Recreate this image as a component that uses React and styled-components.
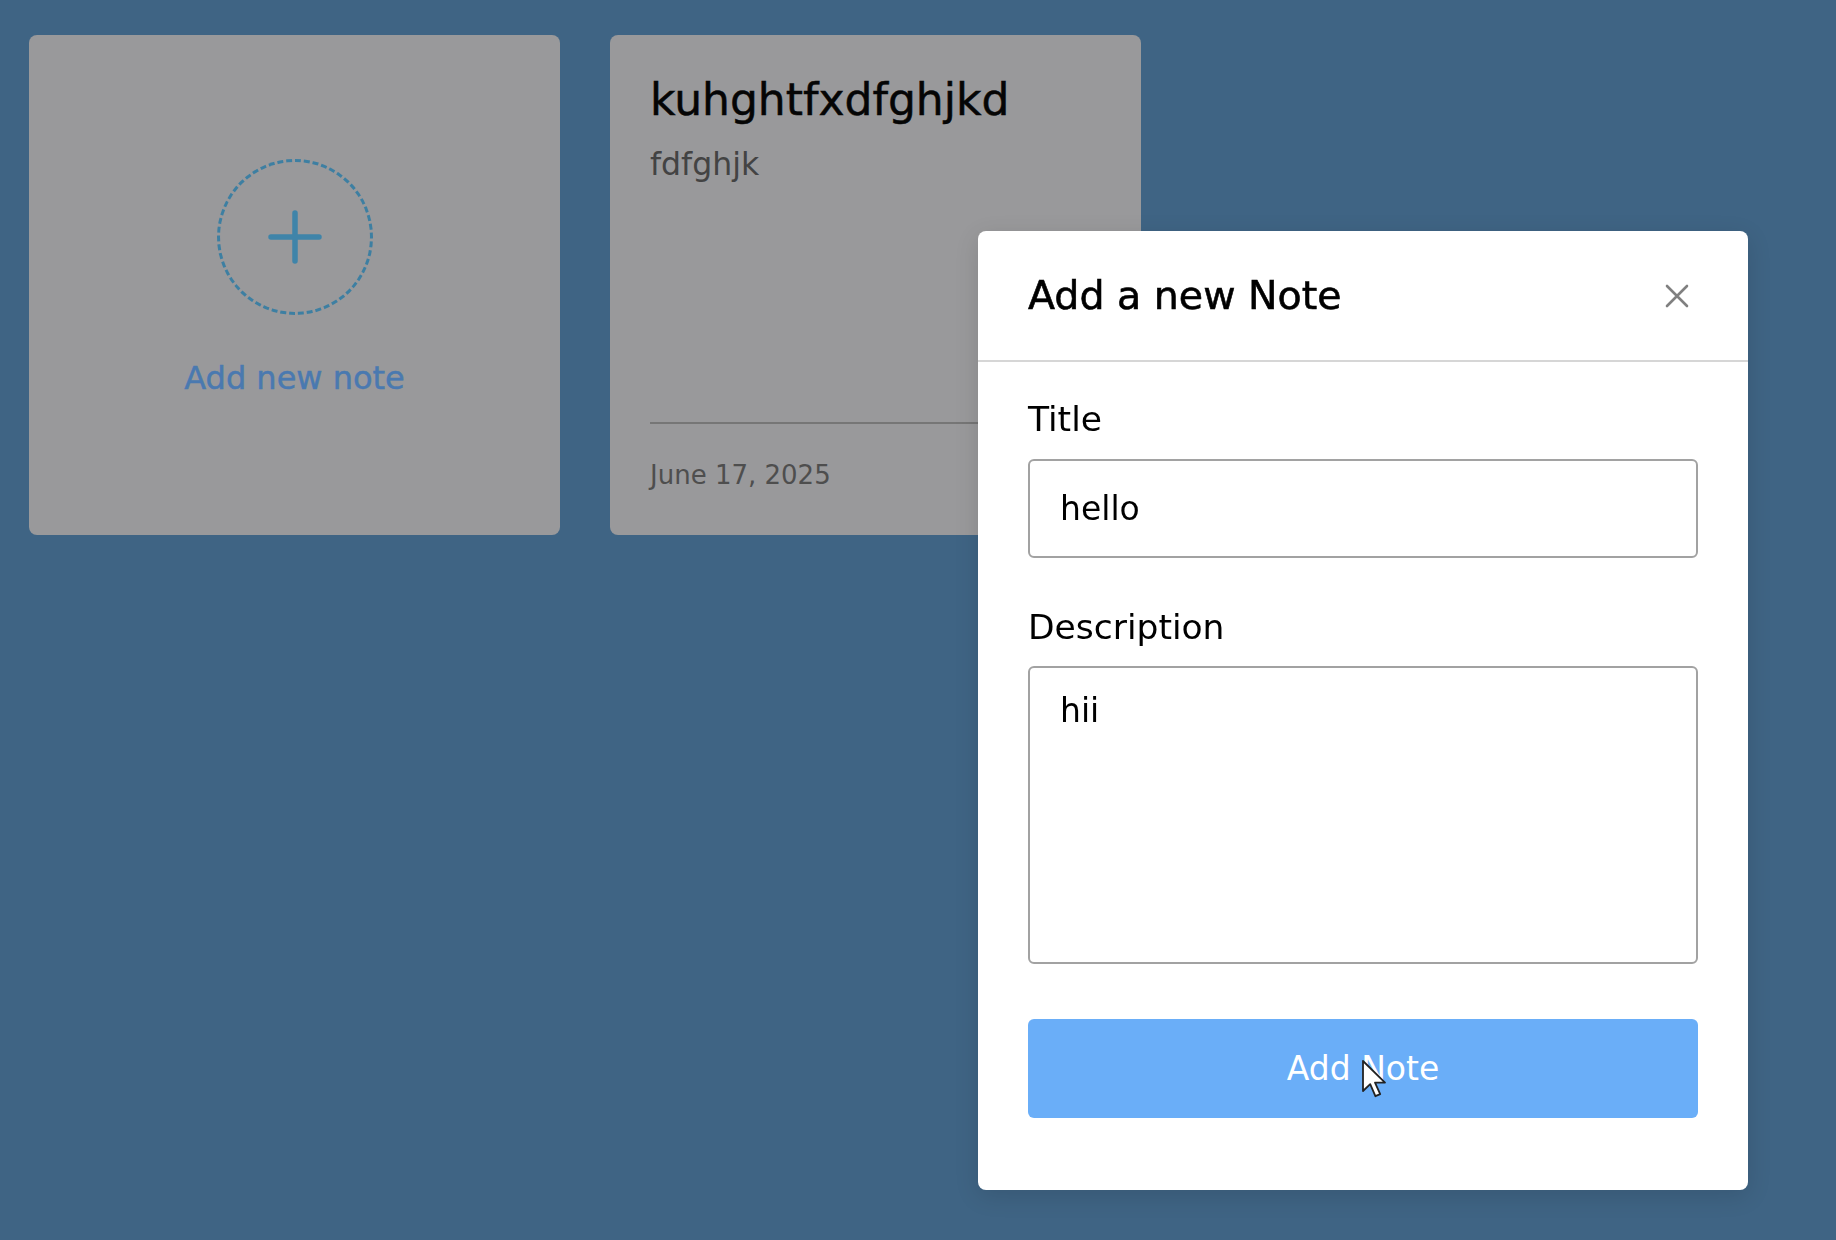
import React from 'react'
import styled, { createGlobalStyle } from 'styled-components'

const GlobalStyle = createGlobalStyle`
  * { box-sizing: border-box; }
  html, body {
    margin: 0;
    background: #3f6484;
    font-family: "DejaVu Sans", "Noto Sans", sans-serif;
  }
`

const notes = [
  { id: 1, title: 'kuhghtfxdfghjkd', description: 'fdfghjk', date: 'June 17, 2025' },
]

function App() {
  return (
    <>
      <GlobalStyle />
      <Page>
        <Grid>
          <AddCard>
            <PlusCircle>
              <svg width="56" height="56" viewBox="0 0 56 56">
                <path d="M28 4 V52 M4 28 H52" stroke="#3f84a9" strokeWidth="5.5" strokeLinecap="round" />
              </svg>
            </PlusCircle>
            <AddLabel>Add new note</AddLabel>
          </AddCard>
          {notes.map((n) => (
            <NoteCard key={n.id}>
              <NoteTitle>{n.title}</NoteTitle>
              <NoteDesc>{n.description}</NoteDesc>
              <Spacer />
              <NoteFooter>
                <NoteDate>{n.date}</NoteDate>
              </NoteFooter>
            </NoteCard>
          ))}
        </Grid>
      </Page>

      <Modal>
        <ModalHeader>
          <ModalTitle>Add a new Note</ModalTitle>
          <CloseButton aria-label="close">
            <svg width="24" height="24" viewBox="0 0 24 24">
              <path d="M2 2 L22 22 M22 2 L2 22" stroke="#808080" strokeWidth="2.6" strokeLinecap="round" />
            </svg>
          </CloseButton>
        </ModalHeader>
        <ModalBody>
          <Label>Title</Label>
          <TextInput defaultValue="hello" />
          <Label $top={52}>Description</Label>
          <TextArea defaultValue="hii" />
          <SubmitButton>Add Note</SubmitButton>
        </ModalBody>
      </Modal>

      <Cursor width="26" height="40" viewBox="0 0 13 20">
        <path d="M1 1 L1 16 L4.6 12.6 L7.2 18.6 L9.6 17.6 L7 11.8 L12 11.8 Z" fill="#fff" stroke="#222" strokeWidth="0.9" strokeLinejoin="round" />
      </Cursor>
    </>
  )
}

const Page = styled.div`
  min-height: 1240px;
  padding: 35px 29px;
`

const Grid = styled.div`
  display: grid;
  grid-template-columns: repeat(auto-fill, 531px);
  gap: 50px;
`

const Card = styled.div`
  height: 500px;
  background: #99999b;
  border-radius: 8px;
`

const AddCard = styled(Card)`
  display: flex;
  flex-direction: column;
  align-items: center;
  padding-top: 124px;
`

const PlusCircle = styled.div`
  width: 156px;
  height: 156px;
  border-radius: 50%;
  border: 3.5px dashed #3d7fa2;
  display: flex;
  align-items: center;
  justify-content: center;
`

const AddLabel = styled.div`
  margin-top: 47px;
  font-size: 32px;
  line-height: 1;
  color: #4a79b0;
  -webkit-text-stroke: 0.5px #4a79b0;
`

const NoteCard = styled(Card)`
  display: flex;
  flex-direction: column;
  padding: 43px 40px 47px;
`

const NoteTitle = styled.div`
  font-size: 44px;
  line-height: 1;
  color: #050505;
  -webkit-text-stroke: 0.5px #050505;
`

const NoteDesc = styled.div`
  margin-top: 27px;
  font-size: 31.5px;
  line-height: 1;
  color: #434343;
`

const Spacer = styled.div`
  flex: 1;
`

const NoteFooter = styled.div`
  border-top: 2px solid #767676;
  padding-top: 38px;
`

const NoteDate = styled.div`
  font-size: 26px;
  line-height: 1;
  color: #4e4e4e;
`

const Modal = styled.div`
  position: fixed;
  top: 231px;
  left: 978px;
  width: 770px;
  background: #fff;
  border-radius: 8px;
  box-shadow: 0 6px 24px rgba(0, 0, 0, 0.12);
`

const ModalHeader = styled.div`
  height: 131px;
  display: flex;
  align-items: center;
  justify-content: space-between;
  padding: 0 50px;
  border-bottom: 2px solid #d6d6d6;
`

const ModalTitle = styled.h2`
  margin: 0;
  font-size: 39.5px;
  font-weight: normal;
  line-height: 1;
  color: #000;
  -webkit-text-stroke: 0.6px #000;
`

const CloseButton = styled.button`
  width: 42px;
  height: 42px;
  padding: 0;
  border: none;
  background: none;
  display: flex;
  align-items: center;
  justify-content: center;
  cursor: pointer;
`

const ModalBody = styled.div`
  display: flex;
  flex-direction: column;
  padding: 40px 50px 72px;
`

const Label = styled.label`
  margin-top: ${(p) => p.$top || 0}px;
  margin-bottom: 22px;
  font-size: 34.5px;
  line-height: 1;
  color: #000;
`

const fieldStyles = `
  width: 100%;
  border: 2px solid #a2a2a2;
  border-radius: 6px;
  font-family: "DejaVu Sans", "Noto Sans", sans-serif;
  font-size: 33px;
  color: #000;
  background: #fff;
  outline: none;
`

const TextInput = styled.input`
  ${fieldStyles}
  height: 99px;
  padding: 0 30px;
`

const TextArea = styled.textarea`
  ${fieldStyles}
  height: 298px;
  padding: 23px 30px;
  resize: none;
  line-height: normal;
`

const SubmitButton = styled.button`
  margin-top: 55px;
  height: 99px;
  border: none;
  border-radius: 6px;
  background: #6aaef8;
  color: #fff;
  font-family: "DejaVu Sans", "Noto Sans", sans-serif;
  font-size: 33px;
  cursor: pointer;
`

const Cursor = styled.svg`
  position: fixed;
  left: 1361px;
  top: 1059px;
  pointer-events: none;
`

export default App
